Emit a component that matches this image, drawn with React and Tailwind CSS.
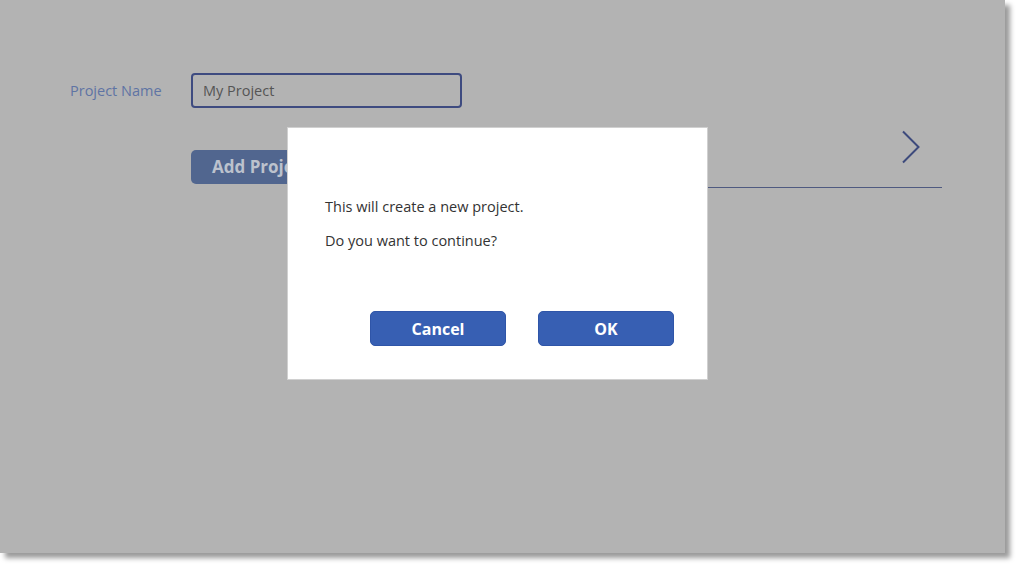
import React from 'react';

function Chevron() {
  return (
    <svg width="20" height="34" viewBox="0 0 20 34" fill="none">
      <path d="M2 1.5 L17.5 17 L2 32.5" stroke="#3d4a7c" strokeWidth="2" />
    </svg>
  );
}

export default function App() {
  return (
    <div className="min-h-screen bg-white font-['Open_Sans','Noto_Sans',sans-serif]">
      <div className="relative h-[553px] w-[1005px] bg-[#b3b3b3] shadow-[5px_5px_5px_rgba(0,0,0,0.4)]">
        {/* background form (dimmed) */}
        <div className="pl-[70px] pt-[73px]">
          <div className="flex h-[35px] items-center">
            <div className="w-[121px] pt-[1px] text-[14.5px] text-[#5f74a4]">Project Name</div>
            <div className="flex h-[35px] w-[271px] items-center rounded-[4px] border-2 border-[#3e4b80] px-[10px] text-[14.5px] text-[#555555]">
              My Project
            </div>
          </div>
          <div className="mt-[12px] flex items-start pr-[63px]">
            <div className="w-[121px]" />
            <div className="mt-[30px] flex h-[34px] w-[170px] items-center rounded-[5px] bg-[#51668f] pl-[21px] text-[17px] font-bold text-[#bcc2cd]">
              Add Project
            </div>
            <div className="ml-auto flex h-[68px] w-[460px] items-center justify-end border-b border-[#4f5a80] pr-[21px] pb-[14px]">
              <Chevron />
            </div>
          </div>
        </div>

        {/* dialog */}
        <div className="absolute left-[287px] top-[127px] h-[253px] w-[421px] border border-[#d0d0d0] bg-white">
          <div className="px-[37px] pt-[69px] text-[14.5px] leading-[20px] text-[#333333]">
            <p>This will create a new project.</p>
            <p className="mt-[14px]">Do you want to continue?</p>
          </div>
          <div className="mt-[60px] flex justify-end gap-[32px] pr-[33px]">
            <button className="h-[35px] w-[136px] rounded-[5px] border border-[#2f55a8] bg-[#375fb3] text-[16px] font-bold text-white">
              Cancel
            </button>
            <button className="h-[35px] w-[136px] rounded-[5px] border border-[#2f55a8] bg-[#375fb3] text-[16px] font-bold text-white">
              OK
            </button>
          </div>
        </div>
      </div>
    </div>
  );
}
